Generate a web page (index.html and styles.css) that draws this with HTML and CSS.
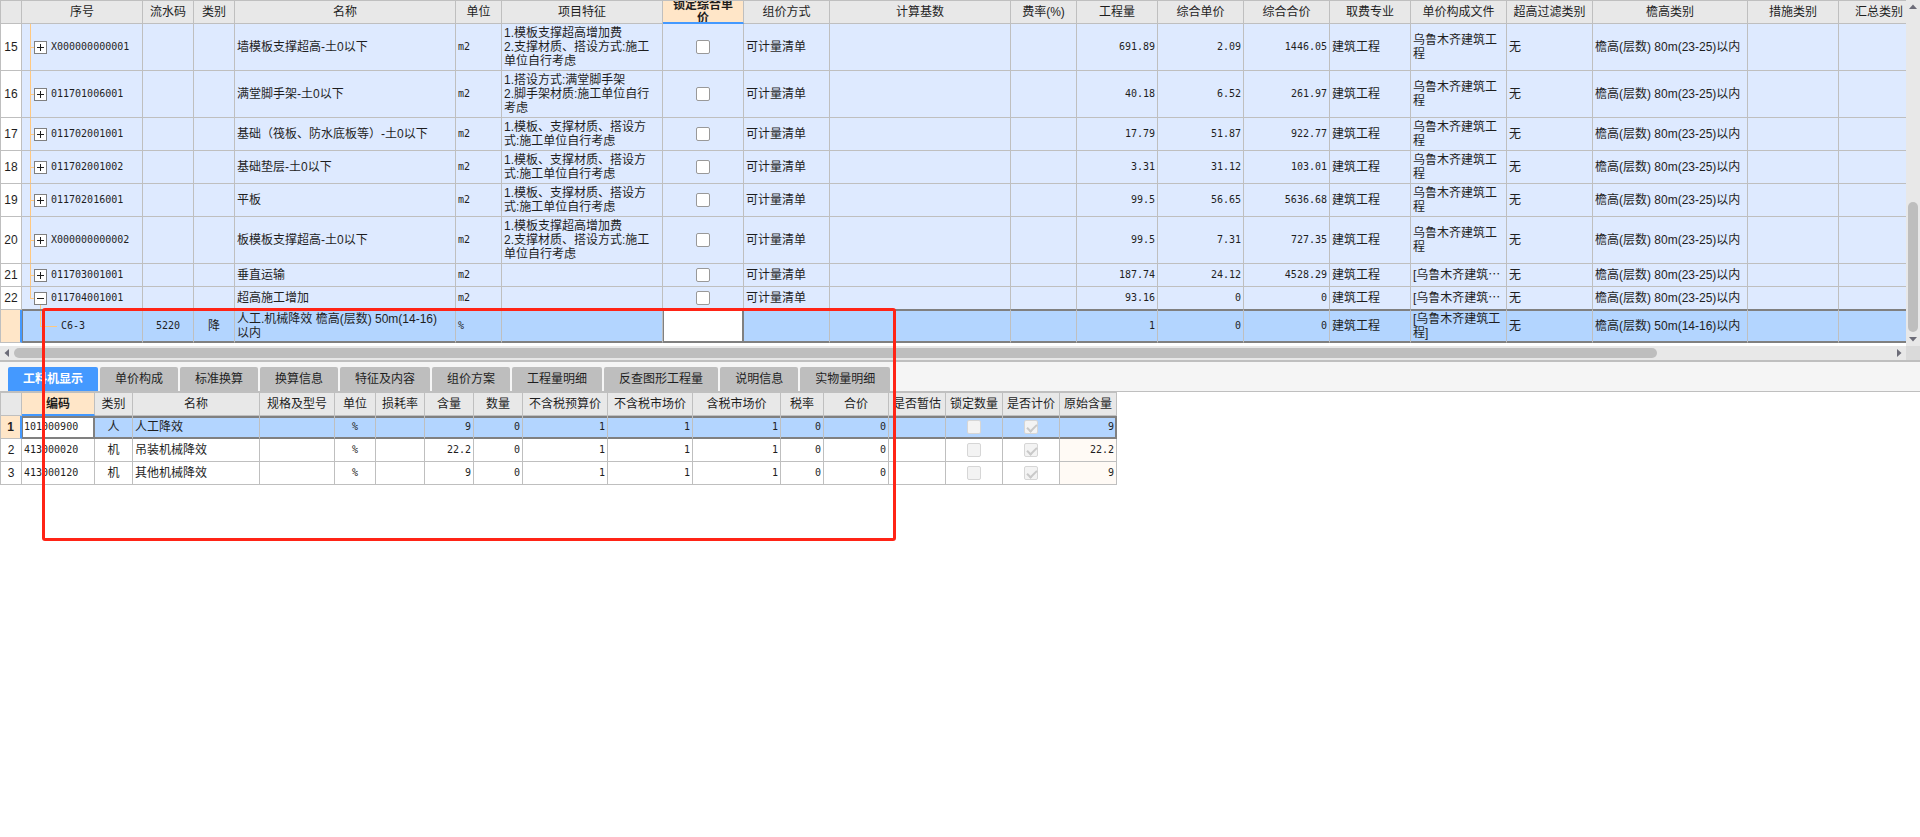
FILE: index.html
```html
<!DOCTYPE html>
<html lang="zh-CN">
<head>
<meta charset="utf-8">
<title>工料机显示</title>
<link rel="stylesheet" href="styles.css">
</head>
<body>
<main class="app">
  <section class="pane">
    <div class="viewport">
      <table class="grid bill">
        <colgroup><col class="w22"><col class="w121"><col class="w51"><col class="w41"><col class="w221"><col class="w46"><col class="w161"><col class="w81"><col class="w86"><col class="w181"><col class="w66"><col class="w81"><col class="w86"><col class="w86"><col class="w81"><col class="w96"><col class="w86"><col class="w155"><col class="w91"><col class="w81"></colgroup>
        <thead>
          <tr><th></th><th>序号</th><th>流水码</th><th>类别</th><th>名称</th><th>单位</th><th>项目特征</th><th class="active"><div class="clip">锁定综合单<br>价</div></th><th>组价方式</th><th>计算基数</th><th>费率(%)</th><th>工程量</th><th>综合单价</th><th>综合合价</th><th>取费专业</th><th>单价构成文件</th><th>超高过滤类别</th><th>檐高类别</th><th>措施类别</th><th>汇总类别</th></tr>
        </thead>
        <tbody>
          <tr class="tall"><th>15</th><td class="tree"><div class="node"><i class="tick"></i><button class="toggle plus" aria-label="展开"></button><span>X000000000001</span></div></td><td></td><td></td><td>墙模板支撑超高-土0以下</td><td class="num left">m2</td><td>1.模板支撑超高增加费<br>2.支撑材质、搭设方式:施工<br>单位自行考虑</td><td class="mid"><input type="checkbox" aria-label="锁定综合单价"></td><td>可计量清单</td><td></td><td></td><td class="num">691.89</td><td class="num">2.09</td><td class="num">1446.05</td><td>建筑工程</td><td>乌鲁木齐建筑工<br>程</td><td>无</td><td>檐高(层数) 80m(23-25)以内</td><td></td><td></td></tr>
          <tr class="tall"><th>16</th><td class="tree"><div class="node"><i class="tick"></i><button class="toggle plus" aria-label="展开"></button><span>011701006001</span></div></td><td></td><td></td><td>满堂脚手架-土0以下</td><td class="num left">m2</td><td>1.搭设方式:满堂脚手架<br>2.脚手架材质:施工单位自行<br>考虑</td><td class="mid"><input type="checkbox" aria-label="锁定综合单价"></td><td>可计量清单</td><td></td><td></td><td class="num">40.18</td><td class="num">6.52</td><td class="num">261.97</td><td>建筑工程</td><td>乌鲁木齐建筑工<br>程</td><td>无</td><td>檐高(层数) 80m(23-25)以内</td><td></td><td></td></tr>
          <tr class="double"><th>17</th><td class="tree"><div class="node"><i class="tick"></i><button class="toggle plus" aria-label="展开"></button><span>011702001001</span></div></td><td></td><td></td><td>基础（筏板、防水底板等）-土0以下</td><td class="num left">m2</td><td>1.模板、支撑材质、搭设方<br>式:施工单位自行考虑</td><td class="mid"><input type="checkbox" aria-label="锁定综合单价"></td><td>可计量清单</td><td></td><td></td><td class="num">17.79</td><td class="num">51.87</td><td class="num">922.77</td><td>建筑工程</td><td>乌鲁木齐建筑工<br>程</td><td>无</td><td>檐高(层数) 80m(23-25)以内</td><td></td><td></td></tr>
          <tr class="double"><th>18</th><td class="tree"><div class="node"><i class="tick"></i><button class="toggle plus" aria-label="展开"></button><span>011702001002</span></div></td><td></td><td></td><td>基础垫层-土0以下</td><td class="num left">m2</td><td>1.模板、支撑材质、搭设方<br>式:施工单位自行考虑</td><td class="mid"><input type="checkbox" aria-label="锁定综合单价"></td><td>可计量清单</td><td></td><td></td><td class="num">3.31</td><td class="num">31.12</td><td class="num">103.01</td><td>建筑工程</td><td>乌鲁木齐建筑工<br>程</td><td>无</td><td>檐高(层数) 80m(23-25)以内</td><td></td><td></td></tr>
          <tr class="double"><th>19</th><td class="tree"><div class="node"><i class="tick"></i><button class="toggle plus" aria-label="展开"></button><span>011702016001</span></div></td><td></td><td></td><td>平板</td><td class="num left">m2</td><td>1.模板、支撑材质、搭设方<br>式:施工单位自行考虑</td><td class="mid"><input type="checkbox" aria-label="锁定综合单价"></td><td>可计量清单</td><td></td><td></td><td class="num">99.5</td><td class="num">56.65</td><td class="num">5636.68</td><td>建筑工程</td><td>乌鲁木齐建筑工<br>程</td><td>无</td><td>檐高(层数) 80m(23-25)以内</td><td></td><td></td></tr>
          <tr class="tall"><th>20</th><td class="tree"><div class="node"><i class="tick"></i><button class="toggle plus" aria-label="展开"></button><span>X000000000002</span></div></td><td></td><td></td><td>板模板支撑超高-土0以下</td><td class="num left">m2</td><td>1.模板支撑超高增加费<br>2.支撑材质、搭设方式:施工<br>单位自行考虑</td><td class="mid"><input type="checkbox" aria-label="锁定综合单价"></td><td>可计量清单</td><td></td><td></td><td class="num">99.5</td><td class="num">7.31</td><td class="num">727.35</td><td>建筑工程</td><td>乌鲁木齐建筑工<br>程</td><td>无</td><td>檐高(层数) 80m(23-25)以内</td><td></td><td></td></tr>
          <tr><th>21</th><td class="tree"><div class="node"><i class="tick"></i><button class="toggle plus" aria-label="展开"></button><span>011703001001</span></div></td><td></td><td></td><td>垂直运输</td><td class="num left">m2</td><td></td><td class="mid"><input type="checkbox" aria-label="锁定综合单价"></td><td>可计量清单</td><td></td><td></td><td class="num">187.74</td><td class="num">24.12</td><td class="num">4528.29</td><td>建筑工程</td><td>[乌鲁木齐建筑⋯</td><td>无</td><td>檐高(层数) 80m(23-25)以内</td><td></td><td></td></tr>
          <tr class="before"><th>22</th><td class="tree last"><div class="node"><i class="tick"></i><button class="toggle" aria-label="收起"></button><span>011704001001</span></div></td><td></td><td></td><td>超高施工增加</td><td class="num left">m2</td><td></td><td class="mid"><input type="checkbox" aria-label="锁定综合单价"></td><td>可计量清单</td><td></td><td></td><td class="num">93.16</td><td class="num">0</td><td class="num">0</td><td>建筑工程</td><td>[乌鲁木齐建筑⋯</td><td>无</td><td>檐高(层数) 80m(23-25)以内</td><td></td><td></td></tr>
          <tr class="double selected"><th></th><td class="tree leaf"><div class="node"><i class="tick"></i><span>C6-3</span></div></td><td class="num mid">5220</td><td class="mid">降</td><td>人工.机械降效 檐高(层数) 50m(14-16)<br>以内</td><td class="num left">%</td><td></td><td class="current"></td><td></td><td></td><td></td><td class="num">1</td><td class="num">0</td><td class="num">0</td><td>建筑工程</td><td>[乌鲁木齐建筑工<br>程]</td><td>无</td><td>檐高(层数) 50m(14-16)以内</td><td></td><td></td></tr>
        </tbody>
      </table>
    </div>
    <div class="vbar">
      <svg class="arrow" viewBox="0 0 14 14"><path d="M3 9 7 4.500 11 9z"/></svg>
      <i class="track-before"></i><i class="thumb"></i><i class="track-after"></i>
      <svg class="arrow" viewBox="0 0 14 14"><path d="M3 5 7 9.500 11 5z"/></svg>
    </div>
    <div class="hbar">
      <svg class="arrow" viewBox="0 0 14 14"><path d="M9 3 4.500 7 9 11z"/></svg>
      <i class="thumb"></i><i class="track-after"></i>
      <svg class="arrow" viewBox="0 0 14 14"><path d="M5 3 9.500 7 5 11z"/></svg>
    </div>
    <div class="corner"></div>
  </section>
  <nav class="tabs" role="tablist">
    <button role="tab" aria-selected="true" class="tab on">工料机显示</button>
    <button role="tab" class="tab">单价构成</button>
    <button role="tab" class="tab">标准换算</button>
    <button role="tab" class="tab">换算信息</button>
    <button role="tab" class="tab">特征及内容</button>
    <button role="tab" class="tab">组价方案</button>
    <button role="tab" class="tab">工程量明细</button>
    <button role="tab" class="tab">反查图形工程量</button>
    <button role="tab" class="tab">说明信息</button>
    <button role="tab" class="tab">实物量明细</button>
  </nav>
  <section class="detail-pane">
    <table class="grid detail">
      <colgroup><col class="w22"><col class="w73"><col class="w38"><col class="w127"><col class="w75"><col class="w41"><col class="w49"><col class="w49"><col class="w49"><col class="w85"><col class="w85"><col class="w88"><col class="w43"><col class="w65"><col class="w57"><col class="w57"><col class="w57"><col class="w57"></colgroup>
      <thead>
        <tr><th></th><th class="active">编码</th><th>类别</th><th>名称</th><th>规格及型号</th><th>单位</th><th>损耗率</th><th>含量</th><th>数量</th><th>不含税预算价</th><th>不含税市场价</th><th>含税市场价</th><th>税率</th><th>合价</th><th>是否暂估</th><th>锁定数量</th><th>是否计价</th><th>原始含量</th></tr>
      </thead>
      <tbody>
        <tr class="selected"><th>1</th><td class="num left current">101000900</td><td class="mid">人</td><td>人工降效</td><td></td><td class="num mid">%</td><td></td><td class="num">9</td><td class="num">0</td><td class="num">1</td><td class="num">1</td><td class="num">1</td><td class="num">0</td><td class="num">0</td><td></td><td class="mid"><input type="checkbox" disabled aria-label="锁定数量"></td><td class="mid"><input type="checkbox" checked disabled aria-label="是否计价"></td><td class="num end">9</td></tr>
        <tr><th>2</th><td class="num left">413000020</td><td class="mid">机</td><td>吊装机械降效</td><td></td><td class="num mid">%</td><td></td><td class="num">22.2</td><td class="num">0</td><td class="num">1</td><td class="num">1</td><td class="num">1</td><td class="num">0</td><td class="num">0</td><td></td><td class="mid"><input type="checkbox" disabled aria-label="锁定数量"></td><td class="mid"><input type="checkbox" checked disabled aria-label="是否计价"></td><td class="num cream">22.2</td></tr>
        <tr><th>3</th><td class="num left">413000120</td><td class="mid">机</td><td>其他机械降效</td><td></td><td class="num mid">%</td><td></td><td class="num">9</td><td class="num">0</td><td class="num">1</td><td class="num">1</td><td class="num">1</td><td class="num">0</td><td class="num">0</td><td></td><td class="mid"><input type="checkbox" disabled aria-label="锁定数量"></td><td class="mid"><input type="checkbox" checked disabled aria-label="是否计价"></td><td class="num cream">9</td></tr>
      </tbody>
    </table>
  </section>
  <div class="marker"></div>
</main>
</body>
</html>
```
FILE: styles.css
```css
:root {
  --line: #bfbfbf;
  --strong: #808080;
  --head: #e8e8e8;
  --row: #deeaff;
  --picked: #b3d5ff;
  --accent: #4499ff;
  --warm: #ffe6c8;
  --tree: #ffc880;
}
* { box-sizing: border-box; }
body {
  margin: 0;
  background: #fff;
  color: #1e1e1e;
  font: 12px/14px "Liberation Sans", "Noto Sans CJK SC", sans-serif;
}
.app { position: relative; min-height: 100vh; }

/* upper pane with its scroll bars */
.pane {
  display: grid;
  grid-template-columns: minmax(0, 1fr) 14px;
  border-bottom: 2px solid var(--line);
}
.viewport { overflow: hidden; padding-bottom: 3px; }
.vbar { display: flex; flex-direction: column; background: var(--head); padding: 0 2px; }
.hbar { display: flex; background: var(--head); height: 14px; padding: 2px 0; }
.corner { background: #dadada; }
.thumb { background: #bebebe; border-radius: 5px; }
.arrow { width: 14px; height: 14px; flex: none; fill: #6c6c78; align-self: center; }
.vbar .track-before { flex: 188; }
.vbar .thumb { flex: 130; }
.hbar .thumb { flex: 1643; }
.hbar .track-after { flex: 235; }

/* grids */
.grid {
  table-layout: fixed;
  border-collapse: separate;
  border-spacing: 0;
  width: 0;
}
.grid th, .grid td {
  height: 23px;
  padding: 0 2px;
  border: 0 solid var(--line);
  border-width: 0 1px 1px 0;
  white-space: nowrap;
  text-align: left;
  font-weight: normal;
}
.grid tr > :first-child { border-left-width: 1px; padding: 0; text-align: center; }
.grid thead th {
  height: 24px;
  border-top-width: 1px;
  background: var(--head);
  text-align: center;
  padding: 0;
}
.grid thead th.active {
  background: var(--warm);
  border-bottom: 2px solid var(--accent);
  font-weight: bold;
}
.clip {
  display: grid;
  align-content: center;
  height: 21px;
  line-height: 13px;
  overflow: hidden;
}
.grid .tall > * { height: 47px; }
.grid .double > * { height: 33px; }
.bill tbody td { background: var(--row); }
.grid td.num { text-align: right; }
.grid td.num, .bill td.tree { font-family: "DejaVu Sans Mono", monospace; font-size: 10px; }
.grid td.left { text-align: left; }
.grid td.mid { text-align: center; }
.grid td.cream { background: #fffaf5; }

/* selected row */
.bill .before td { border-bottom-color: var(--strong); }
.grid .selected td {
  background: var(--picked);
  border-bottom-color: var(--strong);
  box-shadow: inset 0 1px var(--strong), inset 0 -1px var(--strong);
}
.detail .selected td { box-shadow: inset 0 2px var(--strong), inset 0 -1px var(--strong); }
.grid .selected th {
  background: var(--warm);
  border-right: 2px solid var(--accent);
  font-weight: bold;
}
.grid .selected td.current {
  background: #fff;
  border-right-color: var(--strong);
  box-shadow: inset 0 1px var(--strong), inset 0 -1px var(--strong), inset 1px 0 var(--strong), inset -1px 0 var(--strong);
}
.detail .selected td.current {
  box-shadow: inset 0 2px var(--strong), inset 0 -1px var(--strong), inset 1px 0 var(--strong), inset -1px 0 var(--strong);
}
.grid .selected td.end {
  border-right-color: var(--strong);
  box-shadow: inset 0 2px var(--strong), inset 0 -1px var(--strong), inset -1px 0 var(--strong);
}

/* tree column */
.bill td.tree {
  padding: 0;
  background: linear-gradient(var(--tree), var(--tree)) 8px 0 / 1px 100% no-repeat var(--row);
}
.bill td.last {
  background:
    linear-gradient(var(--tree), var(--tree)) 8px 0 / 1px 50% no-repeat,
    linear-gradient(var(--tree), var(--tree)) 18px 100% / 1px 50% no-repeat var(--row);
}
.bill .selected td.leaf {
  background: linear-gradient(var(--tree), var(--tree)) 18px 0 / 1px 50% no-repeat var(--picked);
  box-shadow: inset 0 1px var(--strong), inset 0 -1px var(--strong), inset 1px 0 var(--strong);
}
.node { display: flex; align-items: center; padding-left: 8px; }
.node span { padding-left: 4px; }
.tick { width: 4px; height: 1px; background: var(--tree); }
.leaf .node { padding-left: 18px; }
.leaf .tick { width: 17px; }
.toggle {
  width: 13px;
  height: 13px;
  padding: 0;
  border: 1px solid #808080;
  background: linear-gradient(#1e1e1e, #1e1e1e) center / 7px 1px no-repeat #fff;
}
.toggle.plus {
  background:
    linear-gradient(#1e1e1e, #1e1e1e) center / 7px 1px no-repeat,
    linear-gradient(#1e1e1e, #1e1e1e) center / 1px 7px no-repeat #fff;
}

/* tick boxes */
input[type="checkbox"] {
  appearance: none;
  display: block;
  width: 14px;
  height: 14px;
  margin: 0 auto;
  border: 1px solid #999;
  border-radius: 2px;
  background: #fff;
}
input[type="checkbox"]:disabled { border-color: #d6d6d6; background: #f3f3f3; }
input[type="checkbox"]:checked::before {
  content: "";
  display: block;
  width: 8px;
  height: 4px;
  margin: 3px 2px;
  border: solid #c9c9c9;
  border-width: 0 0 2px 2px;
  transform: rotate(-45deg);
}

/* tabs */
.tabs {
  display: flex;
  gap: 2px;
  padding: 5px 8px 0;
  background: #f5f5f5;
  border-bottom: 1px solid var(--line);
}
.tab {
  height: 24px;
  padding: 0 15px;
  border: 0;
  border-radius: 2px 2px 0 0;
  background: #bebebe;
  color: #1e1e1e;
  font: inherit;
}
.tab.on { background: var(--accent); color: #fff; font-weight: bold; }

.detail-pane { overflow: hidden; }

/* highlighted area drawn over both panes */
.marker {
  position: absolute;
  left: 42px;
  top: 308px;
  width: 854px;
  height: 233px;
  border: 3px solid #ff2416;
  border-radius: 3px;
  pointer-events: none;
}

/* column widths */
.w22 { width: 22px; }
.w38 { width: 38px; }
.w41 { width: 41px; }
.w43 { width: 43px; }
.w46 { width: 46px; }
.w49 { width: 49px; }
.w51 { width: 51px; }
.w57 { width: 57px; }
.w65 { width: 65px; }
.w66 { width: 66px; }
.w73 { width: 73px; }
.w75 { width: 75px; }
.w81 { width: 81px; }
.w85 { width: 85px; }
.w86 { width: 86px; }
.w88 { width: 88px; }
.w91 { width: 91px; }
.w96 { width: 96px; }
.w121 { width: 121px; }
.w127 { width: 127px; }
.w155 { width: 155px; }
.w161 { width: 161px; }
.w181 { width: 181px; }
.w221 { width: 221px; }
```
